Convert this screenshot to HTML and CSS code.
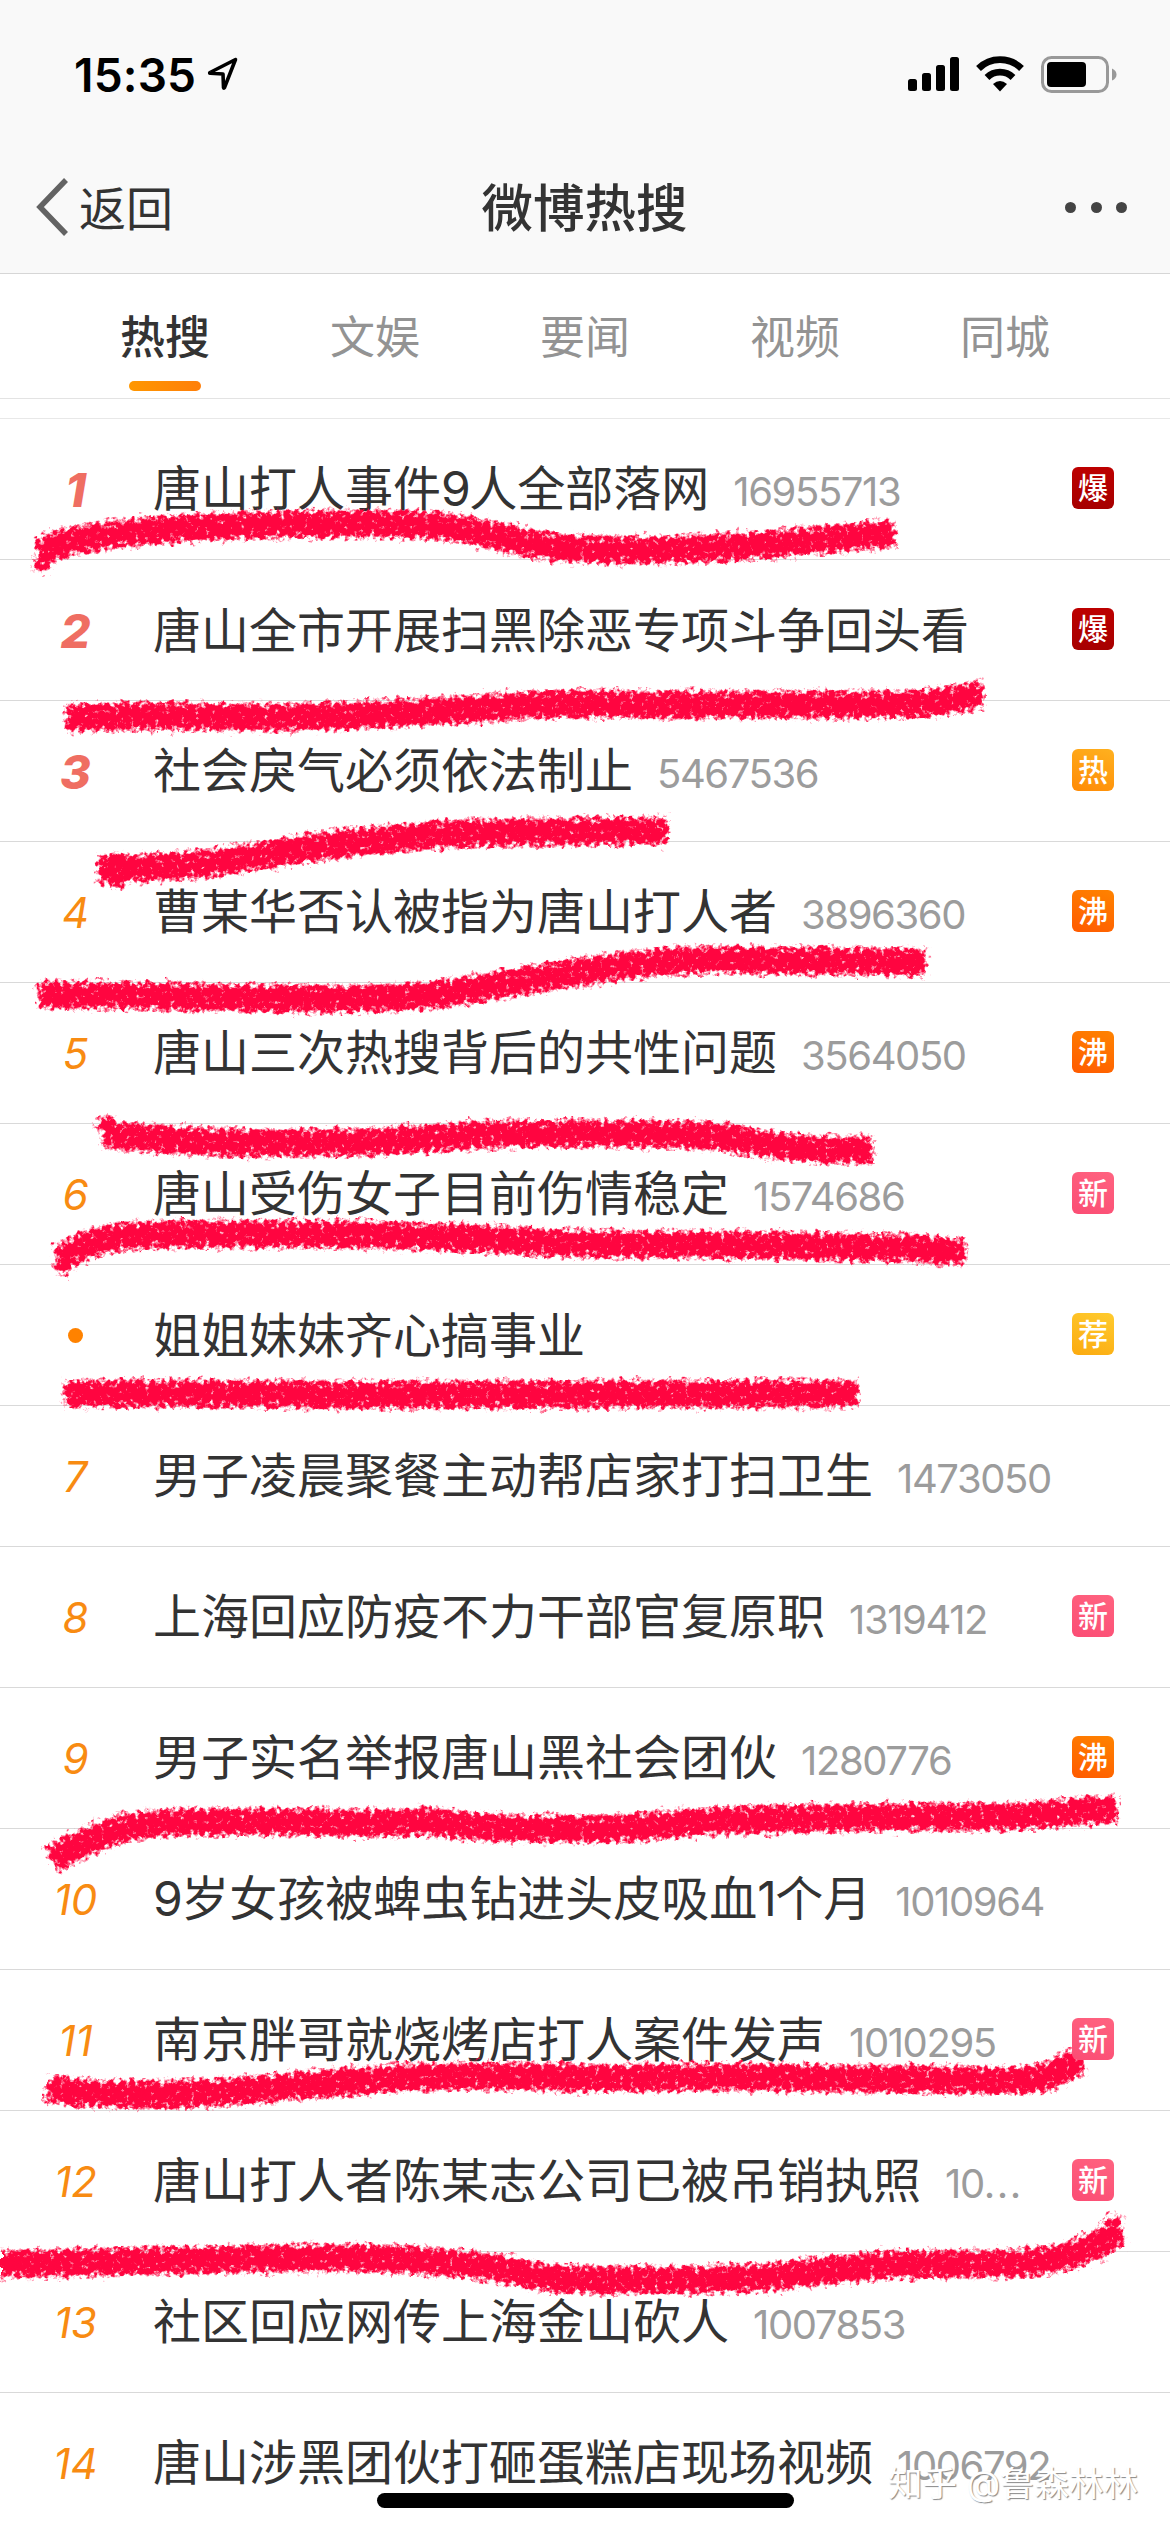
FILE: index.html
```html
<!DOCTYPE html>
<html lang="zh-CN">
<head>
<meta charset="utf-8">
<title>微博热搜</title>
<link rel="stylesheet" href="styles.css">
</head>
<body>
<div class="screen">
  <header class="top">
    <div class="status">
      <div class="status-left">
        <span class="time">15:35</span>
        <svg class="locate" width="32" height="36" viewBox="0 0 32 36"><path d="M28.5 3.5 3 16.5q-.8.6.3.8l12.700.7.5 13.500q.3 1.200 1 0z" fill="none" stroke="#000" stroke-width="3.600" stroke-linejoin="round"/></svg>
      </div>
      <div class="status-right">
        <svg width="51" height="36" viewBox="0 0 51 36"><rect x="0" y="23" width="9" height="12" rx="2.500"/><rect x="14" y="17" width="9" height="18" rx="2.500"/><rect x="28" y="9" width="9" height="26" rx="2.500"/><rect x="42" y="1" width="9" height="34" rx="2.500"/></svg>
        <svg class="wifi" width="50" height="37" viewBox="0 0 50 37"><path d="M3.500 13.500a30.500 30.500 0 0 1 43 0M12 22.500a18.500 18.500 0 0 1 26 0" fill="none" stroke="#000" stroke-width="6.800"/><path d="M25 36.500l-7-7.500q7-6 14 0z"/></svg>
        <svg class="battery" width="76" height="37" viewBox="0 0 76 37"><rect x="1.500" y="1.500" width="65" height="34" rx="9" fill="none" stroke="#999" stroke-width="3"/><rect x="6" y="6" width="39" height="25" rx="4"/><path d="M71 12.500q4.500 2 4.500 6t-4.500 6z" fill="#999"/></svg>
      </div>
    </div>
    <nav class="nav">
      <div class="back">
        <svg width="34" height="60" viewBox="0 0 34 60"><path d="M31 3 5 30l26 27" fill="none" stroke="#636363" stroke-width="5.500"/></svg>
        <span>返回</span>
      </div>
      <h1>微博热搜</h1>
      <div class="more"><i></i><i></i><i></i></div>
    </nav>
  </header>
  <div class="tabs">
    <span class="tab active">热搜</span><span class="tab">文娱</span><span class="tab">要闻</span><span class="tab">视频</span><span class="tab">同城</span>
  </div>
  <ol class="list">
    <li><b class="rank hot">1</b><div class="text"><span>唐山打人事件<u>9</u>人全部落网</span><em>16955713</em></div><i class="tag bao">爆</i></li>
    <li><b class="rank hot">2</b><div class="text"><span>唐山全市开展扫黑除恶专项斗争回头看</span></div><i class="tag bao">爆</i></li>
    <li><b class="rank hot">3</b><div class="text"><span>社会戾气必须依法制止</span><em>5467536</em></div><i class="tag re">热</i></li>
    <li><b class="rank">4</b><div class="text"><span>曹某华否认被指为唐山打人者</span><em>3896360</em></div><i class="tag fei">沸</i></li>
    <li><b class="rank">5</b><div class="text"><span>唐山三次热搜背后的共性问题</span><em>3564050</em></div><i class="tag fei">沸</i></li>
    <li><b class="rank">6</b><div class="text"><span>唐山受伤女子目前伤情稳定</span><em>1574686</em></div><i class="tag xin">新</i></li>
    <li><b class="rank"><i class="dot"></i></b><div class="text"><span>姐姐妹妹齐心搞事业</span></div><i class="tag jian">荐</i></li>
    <li><b class="rank">7</b><div class="text"><span>男子凌晨聚餐主动帮店家打扫卫生</span><em>1473050</em></div></li>
    <li><b class="rank">8</b><div class="text"><span>上海回应防疫不力干部官复原职</span><em>1319412</em></div><i class="tag xin">新</i></li>
    <li><b class="rank">9</b><div class="text"><span>男子实名举报唐山黑社会团伙</span><em>1280776</em></div><i class="tag fei">沸</i></li>
    <li><b class="rank">10</b><div class="text"><span><u>9</u>岁女孩被蜱虫钻进头皮吸血<u>1</u>个月</span><em>1010964</em></div></li>
    <li><b class="rank">11</b><div class="text"><span>南京胖哥就烧烤店打人案件发声</span><em>1010295</em></div><i class="tag xin">新</i></li>
    <li><b class="rank">12</b><div class="text"><span>唐山打人者陈某志公司已被吊销执照</span><em>10<s>...</s></em></div><i class="tag xin">新</i></li>
    <li><b class="rank">13</b><div class="text"><span>社区回应网传上海金山砍人</span><em>1007853</em></div></li>
    <li><b class="rank">14</b><div class="text"><span>唐山涉黑团伙打砸蛋糕店现场视频</span><em>1006792</em></div></li>
  </ol>

  <!-- crayon underlines drawn over the list -->
  <svg class="marks" width="1170" height="2532" viewBox="0 0 1170 2532">
    <defs>
      <filter id="crayon" filterUnits="userSpaceOnUse" x="0" y="400" width="1170" height="1950" color-interpolation-filters="sRGB">
        <feGaussianBlur in="SourceGraphic" stdDeviation="4.500" result="soft"/>
        <feTurbulence type="fractalNoise" baseFrequency="0.2" numOctaves="3" seed="7" result="grain"/>
        <feComposite in="soft" in2="grain" operator="arithmetic" k1="0" k2="0.620" k3="1" k4="-0.300" result="mix"/>
        <feComponentTransfer in="mix" result="mask"><feFuncA type="linear" slope="3.600" intercept="-1.350"/></feComponentTransfer>
        <feFlood flood-color="#ff0540"/>
        <feComposite in2="mask" operator="in" result="paint"/>
        <feMorphology in="SourceAlpha" operator="dilate" radius="3" result="wide"/>
        <feTurbulence type="fractalNoise" baseFrequency="0.12" numOctaves="2" seed="3" result="wobble"/>
        <feDisplacementMap in="wide" in2="wobble" scale="12" xChannelSelector="R" yChannelSelector="G" result="limit"/>
        <feComposite in="paint" in2="limit" operator="in"/>
      </filter>
    </defs>
    <g filter="url(#crayon)" fill="none" stroke="#f04" stroke-width="27" stroke-linejoin="round">
      <path d="M40 552C65 539 100 536 150 531S290 524 350 524 440 523 500 537 580 549 620 550 690 549 730 547 840 537 895 534"/>
      <path d="M41 572 43 552" stroke-width="15"/>
      <path d="M66 718C140 713 230 719 300 717S420 713 500 707 620 706 700 705 850 706 910 704 950 695 983 695"/>
      <path d="M98 870C130 868 190 866 220 862S300 848 350 843 450 832 520 832 620 831 668 831"/>
      <circle cx="117" cy="870" r="4"/>
      <path d="M38 995C90 995 160 996 240 998S400 1000 448 993 550 976 600 969 680 960 720 960 840 961 926 962"/>
      <path d="M103 1134C150 1139 210 1143 261 1143S380 1143 448 1137 600 1134 640 1134 710 1134 753 1142 820 1150 873 1150"/>
      <path d="M102 1118 113 1135" stroke-width="16"/>
      <path d="M60 1260C80 1245 105 1236 149 1235S330 1233 410 1236 500 1240 560 1243 680 1244 734 1245 850 1247 910 1248L965 1253"/>
      <path d="M60 1274 68 1254" stroke-width="15"/>
      <path d="M64 1394C200 1392 310 1396 420 1395S700 1393 858 1394"/>
      <path d="M51 1860C80 1843 120 1826 149 1824S260 1820 336 1823 410 1818 440 1823 520 1829 585 1829 690 1821 734 1820 850 1817 958 1817 1070 1810 1118 1809"/>
      <path d="M47 2088C80 2096 170 2096 224 2092S330 2082 410 2078 520 2077 585 2078 690 2077 734 2077 850 2078 958 2080 1040 2078 1081 2059"/>
      <path d="M-15 2264C60 2264 90 2262 149 2261S290 2257 354 2258 490 2265 522 2273 580 2280 622 2280 740 2281 809 2273 880 2264 958 2264 1065 2265 1119 2232"/>
      <path d="M1113 2245 1115 2216" stroke-width="15"/>
    </g>
  </svg>
  <div class="home-bar"></div>
  <div class="watermark">知乎 @鲁森林林</div>
</div>
</body>
</html>
```
FILE: styles.css
```css
* { box-sizing: border-box; }
body {
  margin: 0;
  background: #fff;
  color: #333;
  font-family: Inter, "Noto Sans CJK SC", sans-serif;
}
i, em { font-style: normal; }
u, s { text-decoration: none; }
svg { display: block; flex: none; }
.screen {
  position: relative;
  width: 1170px;
  height: 2532px;
  overflow: hidden;
}
.top {
  height: 274px;
  background: #f9f9f9;
  border-bottom: 1px solid #d6d6d6;
}
.status {
  height: 141px;
  padding: 55px 53px 0 74px;
  display: flex;
  justify-content: space-between;
  align-items: flex-start;
}
.status-left, .status-right { display: flex; }
.time {
  width: 133px;
  color: #000;
  font-size: 46px;
  line-height: 40px;
  font-weight: 600;
  letter-spacing: 0.2px;
}
.locate { margin-top: 1px; }
.status-right { padding-top: 1px; }
.wifi { margin: -1px 16px 0 16px; }
.nav {
  height: 132px;
  padding: 2px 43px 0 35px;
  display: grid;
  grid-template-columns: 1fr auto 1fr;
  align-items: center;
}
.back { display: flex; align-items: center; gap: 10px; font-size: 47px; line-height: 60px; }
.back svg { margin-top: -2px; }
.back span { padding-top: 2px; }
.nav h1 { margin: 0; padding-right: 3px; margin-left: 10px; font-size: 51.500px; line-height: 60px; font-weight: 500; }
.more { display: flex; gap: 14.500px; justify-content: flex-end; }
.more i { width: 11px; height: 11px; margin-top: -2px; border-radius: 50%; background: #444; }
.tabs {
  height: 125px;
  padding: 0 60px;
  display: flex;
  border-bottom: 1px solid #e3e3e3;
}
.tab {
  width: 210px;
  display: flex;
  flex-direction: column;
  align-items: center;
  padding-top: 34px;
  font-size: 45px;
  line-height: 60px;
  color: #939393;
}
.active { color: #333; font-weight: 500; }
.active::after {
  content: "";
  width: 72px;
  height: 10px;
  margin-top: 13px;
  border-radius: 5px;
  background: linear-gradient(90deg, #ff9700, #ff7f0a);
}
.list {
  margin: 19px 0 0;
  padding: 0;
  list-style: none;
  border-top: 1px solid #e8e8e8;
}
.list li {
  height: 141px;
  padding-right: 56px;
  display: flex;
  align-items: center;
  border-bottom: 1px solid #d9d9d9;
}
.rank {
  width: 151px;
  flex: none;
  display: flex;
  justify-content: center;
  color: #f88b12;
  font-size: 42px;
  font-style: italic;
  font-weight: 400;
}
.hot { color: #ef6e62; font-size: 47px; font-weight: 800; }
.dot { width: 15px; height: 15px; border-radius: 50%; background: #ff8200; }
.text {
  flex: 1;
  display: flex;
  align-items: baseline;
  gap: 24px;
  padding: 2px 0 0 2px;
  font-size: 48px;
  line-height: 70px;
  white-space: nowrap;
}
.text u { font-weight: 400; letter-spacing: -1.500px; }
.text em { color: #9c9c9c; font-size: 40px; font-weight: 400; letter-spacing: -1.400px; }
.text s { letter-spacing: 1.500px; }
.tag {
  position: relative;
  z-index: 2;
  width: 42px;
  height: 42px;
  margin-bottom: 2px;
  border-radius: 6px;
  color: #fff;
  font-size: 30px;
  line-height: 42px;
  font-weight: 500;
  text-align: center;
}
.bao { background: linear-gradient(#bd0000, #a60000); }
.re { background: linear-gradient(200deg, #ffb11f, #ff8a05); }
.fei { background: linear-gradient(200deg, #ff8300, #ff5a00); }
.xin { background: linear-gradient(200deg, #ff6380, #fb4d74); }
.jian { background: linear-gradient(200deg, #ffcb2e, #fbaa10); }
.marks { position: absolute; left: 0; top: 0; }
.home-bar {
  position: absolute;
  left: 377px;
  top: 2493px;
  width: 417px;
  height: 15px;
  border-radius: 8px;
  background: #000;
}
.watermark {
  position: absolute;
  left: 888px;
  top: 2460px;
  color: #fff;
  font-size: 34.500px;
  line-height: 48px;
  white-space: nowrap;
  text-shadow: 1px 1px 1px #888;
}
```
